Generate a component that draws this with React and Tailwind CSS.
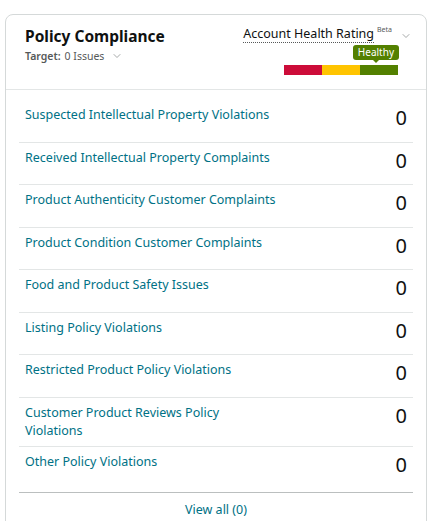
import { ChevronDown } from "lucide-react";

const items = [
  "Suspected Intellectual Property Violations",
  "Received Intellectual Property Complaints",
  "Product Authenticity Customer Complaints",
  "Product Condition Customer Complaints",
  "Food and Product Safety Issues",
  "Listing Policy Violations",
  "Restricted Product Policy Violations",
  ["Customer Product Reviews Policy", "Violations"],
  "Other Policy Violations",
];

const font = { fontFamily: "'Noto Sans', 'Open Sans', sans-serif" };

export default function App() {
  return (
    <div className="bg-white min-h-screen pt-[14px] px-[5px]" style={font}>
      <div className="w-[422px] border border-[#d5d9d9] rounded-lg bg-white">
        {/* header */}
        <div className="flex justify-between h-[75px] border-b border-[#e3e6e6] pl-[19px] pr-[14px]">
          <div className="pt-[11px]">
            <h2 className="text-[15.5px] font-bold leading-[20px] text-[#0f1111]">Policy Compliance</h2>
            <div className="flex items-center gap-1 mt-[3px] text-[10.5px] leading-[14px] text-[#565959]">
              <span className="font-semibold">Target:</span>
              <span>0 Issues</span>
              <ChevronDown className="w-3 h-3 ml-[3px] text-[#888c8c]" strokeWidth={1.5} />
            </div>
          </div>
          <div className="flex flex-col items-end pt-[10px]">
            <div className="flex items-start">
              <span className="text-[12.5px] leading-[17px] text-[#0f1111] border-b border-dotted border-[#565959]">
                Account Health Rating
              </span>
              <span className="text-[7px] leading-[8px] text-[#565959] ml-[3px] mt-[1px]">Beta</span>
              <ChevronDown className="w-3 h-3 ml-[8px] mt-[5px] text-[#888c8c]" strokeWidth={1.5} />
            </div>
            <div className="relative mt-[2px] mr-[14px] flex flex-col items-end">
              <div className="relative bg-[#538000] text-white text-[10px] leading-[15px] px-[5px] -mr-[1px] rounded-[3px]">
                Healthy
                <div className="absolute left-1/2 -bottom-[3px] -translate-x-1/2 w-0 h-0 border-l-[3px] border-r-[3px] border-t-[3px] border-l-transparent border-r-transparent border-t-[#538000]" />
              </div>
              <div className="flex mt-[5px]">
                <div className="w-[38px] h-[10px] bg-[#cc0c39]" />
                <div className="w-[38px] h-[10px] bg-[#ffc400]" />
                <div className="w-[38px] h-[10px] bg-[#538000]" />
              </div>
            </div>
          </div>
        </div>

        {/* list */}
        <div className="px-[13px] pt-[10px]">
          {items.map((label, i) => (
            <div
              key={i}
              className={`flex justify-between items-start pl-[6px] pr-[6px] pt-[6px] ${
                i === items.length - 1 ? "pb-[10px] border-b border-[#bbbfbf]" : "pb-[6.5px] border-b border-[#e3e6e6]"
              }`}
            >
              <span className="text-[12.5px] leading-[18px] text-[#007185] max-w-[290px]">
                {Array.isArray(label) ? (
                  <>
                    {label[0]}
                    <br />
                    {label[1]}
                  </>
                ) : (
                  label
                )}
              </span>
              <span className="h-[29px] text-[20px] leading-[24px] text-[#0f1111]">0</span>
            </div>
          ))}
          <div className="text-center pt-[8px] pb-[10px] text-[12.5px] leading-[18px] text-[#007185]">View all (0)</div>
        </div>
      </div>
    </div>
  );
}
